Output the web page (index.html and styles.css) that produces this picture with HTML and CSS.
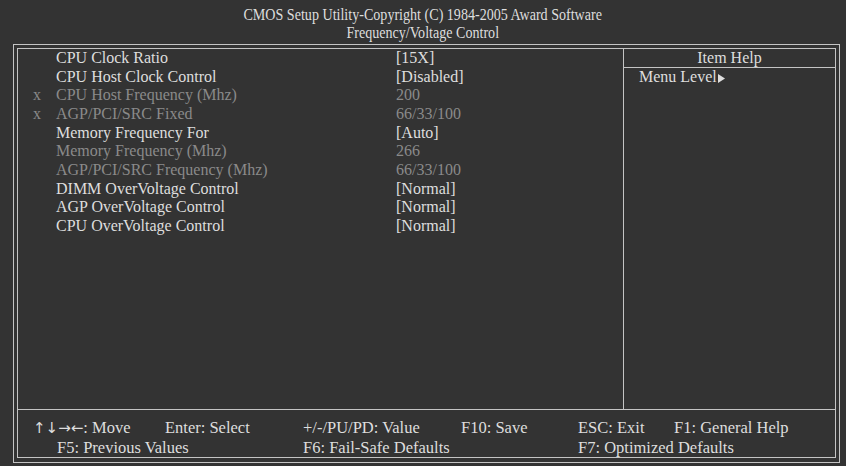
FILE: index.html
```html
<!DOCTYPE html>
<html lang="en">
<head>
<meta charset="utf-8">
<title>Frequency/Voltage Control</title>
<link rel="stylesheet" href="styles.css">
</head>
<body>
<div class="title">
  <div><span class="narrow">CMOS Setup Utility-Copyright (C) 1984-2005 Award Software</span></div>
  <div><span class="narrow">Frequency/Voltage Control</span></div>
</div>
<div class="frame">
  <div class="inner">
    <div class="main">
      <div class="items">
        <div class="row"><span class="mark"></span><span>CPU Clock Ratio</span><span>[15X]</span></div>
        <div class="row"><span class="mark"></span><span>CPU Host Clock Control</span><span>[Disabled]</span></div>
        <div class="row off"><span class="mark">x</span><span>CPU Host Frequency (Mhz)</span><span>200</span></div>
        <div class="row off"><span class="mark">x</span><span>AGP/PCI/SRC Fixed</span><span>66/33/100</span></div>
        <div class="row"><span class="mark"></span><span>Memory Frequency For</span><span>[Auto]</span></div>
        <div class="row off"><span class="mark"></span><span>Memory Frequency (Mhz)</span><span>266</span></div>
        <div class="row off"><span class="mark"></span><span>AGP/PCI/SRC Frequency (Mhz)</span><span>66/33/100</span></div>
        <div class="row"><span class="mark"></span><span>DIMM OverVoltage Control</span><span>[Normal]</span></div>
        <div class="row"><span class="mark"></span><span>AGP OverVoltage Control</span><span>[Normal]</span></div>
        <div class="row"><span class="mark"></span><span>CPU OverVoltage Control</span><span>[Normal]</span></div>
      </div>
      <div class="help">
        <div class="help-head">Item Help</div>
        <div class="help-body">Menu Level<svg class="tri" width="7" height="9" viewBox="0 0 7 9"><path d="M0 0 L7 4.5 L0 9 Z" fill="#dedede"/></svg></div>
      </div>
    </div>
    <div class="keys">
      <span><span class="arrows">&uarr;&darr;&rarr;&larr;</span>: Move</span>
      <span>Enter: Select</span>
      <span>+/-/PU/PD: Value</span>
      <span>F10: Save</span>
      <span>ESC: Exit</span>
      <span>F1: General Help</span>
      <span class="k-f5">F5: Previous Values</span>
      <span class="k-f6">F6: Fail-Safe Defaults</span>
      <span class="k-f7">F7: Optimized Defaults</span>
    </div>
  </div>
</div>
</body>
</html>
```
FILE: styles.css
```css
body {
  margin: 0;
  background-color: #333333;
  color: #dedede;
  font-family: "Liberation Serif", "Times New Roman", serif;
  font-size: 16px;
}
.narrow {
  display: inline-block;
  transform: scaleX(0.88);
  white-space: nowrap;
}
.title {
  text-align: center;
  line-height: 18px;
  padding-top: 6px;
  height: 38px;
}
.frame {
  margin-left: 13px;
  width: 819px;
  height: 410px;
  border: 1px solid #c4c4c4;
  padding: 3px 3px 4px 3px;
}
.inner {
  border: 1px solid #c4c4c4;
  height: 408px;
  display: flex;
  flex-direction: column;
}
.main {
  display: flex;
  height: 360px;
  border-bottom: 1px solid #c4c4c4;
}
.items {
  box-sizing: border-box;
  width: 605px;
  padding-left: 15px;
}
.row {
  display: grid;
  grid-template-columns: 23px 340px auto;
  height: 18.67px;
  line-height: 18.67px;
  white-space: nowrap;
}
.off {
  color: #8a8a8a;
}
.help {
  flex: 1;
  border-left: 1px solid #c4c4c4;
}
.help-head {
  text-align: center;
  height: 18px;
  line-height: 18px;
  border-bottom: 1px solid #c4c4c4;
}
.help-body {
  padding-left: 15px;
  line-height: 18px;
}
.tri {
  margin-left: 1px;
  vertical-align: -1px;
}
.keys {
  display: grid;
  grid-template-columns: 132px 138px 158px 117px 96px auto;
  padding: 8px 0 0 15px;
  font-size: 16.5px;
  line-height: 19px;
  white-space: nowrap;
}
.arrows {
  font-family: "DejaVu Sans", sans-serif;
  font-size: 15px;
}
.k-f5 {
  grid-column: 1 / span 2;
  padding-left: 24px;
}
.k-f6 {
  grid-column: 3 / span 2;
}
.k-f7 {
  grid-column: 5 / span 2;
}
```
